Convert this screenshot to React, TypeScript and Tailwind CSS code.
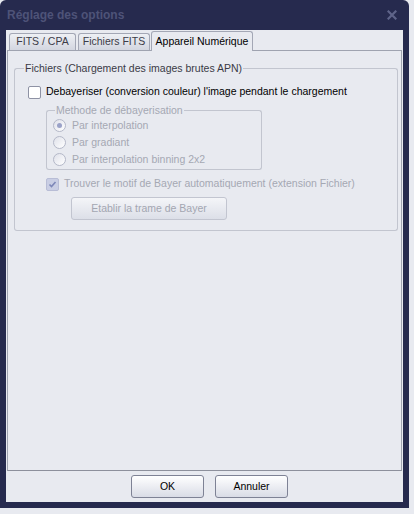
import React from "react";

const font = { fontFamily: '"Liberation Sans", Arial, sans-serif' };

function GroupBox({
  title,
  titleClass,
  lead,
  className,
  bodyClass,
  children,
}: {
  title: string;
  titleClass: string;
  lead: string;
  className: string;
  bodyClass: string;
  children: React.ReactNode;
}) {
  return (
    <div className={className}>
      <div className="flex h-[13px]">
        <div className={`${lead} h-[7px] self-end rounded-tl-[3px] border-l border-t border-[#c2c5cf]`} />
        <span className={`px-[1px] text-[10.5px] leading-[13px] ${titleClass}`}>{title}</span>
        <div className="h-[7px] flex-1 self-end rounded-tr-[3px] border-r border-t border-[#c2c5cf]" />
      </div>
      <div className={`rounded-b-[3px] border-x border-b border-[#c2c5cf] ${bodyClass}`}>{children}</div>
    </div>
  );
}

function Radio({ checked, label }: { checked?: boolean; label: string }) {
  return (
    <div className="flex h-[17px] items-center">
      <span className="flex h-[13px] w-[13px] items-center justify-center rounded-full border border-[#b4b8c8] bg-gradient-to-br from-[#dfe1ea] to-white">
        {checked && <span className="h-[5px] w-[5px] rounded-full bg-[#9aa2c8]" />}
      </span>
      <span className="ml-[6px] text-[10.5px] text-[#a5a8b3]">{label}</span>
    </div>
  );
}

function Button({ children, disabled }: { children: React.ReactNode; disabled?: boolean }) {
  return (
    <button
      className={
        disabled
          ? "flex h-[23px] w-[156px] items-center justify-center rounded-[3px] border border-[#c2c5d0] bg-gradient-to-b from-[#f4f5f8] to-[#dcdfe8] text-[10.5px] text-[#a3a6b1]"
          : "flex h-[23px] w-[73px] items-center justify-center rounded-[3px] border border-[#7e8295] bg-gradient-to-b from-white to-[#d9dce6] text-[10.5px] text-black"
      }
    >
      {children}
    </button>
  );
}

export default function App() {
  return (
    <div className="h-[514px] w-[414px] bg-[#e8eaf0]" style={font}>
      <div className="flex h-[508px] w-[409px] flex-col rounded-t-[6px] bg-[#262a4e] px-[6px] pb-[6px]">
        {/* title bar */}
        <div className="flex h-[30px] shrink-0 items-center justify-between pl-[1px] pr-[6px]">
          <span className="text-[12px] font-bold text-[#4e5378]">Réglage des options</span>
          <svg width="10" height="10" viewBox="0 0 10 10">
            <path d="M1.5 1.5 L8.5 8.5 M8.5 1.5 L1.5 8.5" stroke="#5f6489" strokeWidth="2.2" strokeLinecap="square" />
          </svg>
        </div>

        {/* client area */}
        <div className="flex flex-1 flex-col bg-[#e8eaf0] px-[1px]">
          {/* tabs */}
          <div className="flex h-[20px] items-end pl-[2px]">
            <div className="flex h-[17px] w-[67px] items-center justify-center rounded-t-[3px] border border-b-0 border-[#a3a7b5] bg-gradient-to-b from-[#eef0f4] to-[#d3d6e0] text-[10.5px] text-[#3c3c48]">
              FITS / CPA
            </div>
            <div className="ml-[2px] flex h-[17px] w-[72px] items-center justify-center rounded-t-[3px] border border-b-0 border-[#a3a7b5] bg-gradient-to-b from-[#eef0f4] to-[#d3d6e0] text-[10.5px] text-[#3c3c48]">
              Fichiers FITS
            </div>
            <div className="relative z-10 ml-[1px] -mb-[1px] flex h-[20px] w-[102px] items-center justify-center rounded-t-[3px] border border-b-0 border-[#a3a7b5] bg-[#e8eaf0] text-[10.5px] text-black">
              Appareil Numérique
            </div>
          </div>

          {/* tab panel */}
          <div className="h-[421px] border border-[#9fa3b0] border-b-[#8d909c]">
            <GroupBox
              title="Fichiers (Chargement des images brutes APN)"
              titleClass="text-[#3a3a46]"
              lead="w-[10px]"
              className="ml-[6px] mr-[3px] mt-[11px]"
              bodyClass="pb-[10px] pl-[13px]"
            >
              <div className="pt-[9px]" />
              <div className="flex h-[16px] items-center">
                <span className="h-[13px] w-[13px] rounded-[2px] border border-[#8e92a4] bg-white" />
                <span className="ml-[5px] text-[10.5px] text-black">
                  Debayeriser (conversion couleur) l'image pendant le chargement
                </span>
              </div>

              <GroupBox
                title="Methode de débayerisation"
                titleClass="text-[#a5a8b3]"
                lead="w-[9px]"
                className="ml-[18px] mt-[4px] w-[216px]"
                bodyClass="pb-[1px] pl-[6px]"
              >
                <Radio checked label="Par interpolation" />
                <Radio label="Par gradiant" />
                <Radio label="Par interpolation binning 2x2" />
              </GroupBox>

              <div className="ml-[18px] mt-[6px] flex h-[16px] items-center">
                <span className="flex h-[13px] w-[13px] items-center justify-center rounded-[2px] border border-[#b8bdd6] bg-[#c9cee4]">
                  <svg width="9" height="9" viewBox="0 0 9 9">
                    <path d="M1.5 4.5 L3.5 6.5 L7.5 2" fill="none" stroke="#7d87b8" strokeWidth="1.6" />
                  </svg>
                </span>
                <span className="ml-[5px] text-[10.5px] text-[#a5a8b3]">
                  Trouver le motif de Bayer automatiquement (extension Fichier)
                </span>
              </div>

              <div className="ml-[43px] mt-[5px]">
                <Button disabled>Etablir la trame de Bayer</Button>
              </div>
            </GroupBox>
          </div>

          {/* bottom buttons */}
          <div className="flex flex-1 items-start gap-[11px] pl-[124px] pt-[4px]">
            <Button>OK</Button>
            <Button>Annuler</Button>
          </div>
        </div>
      </div>
    </div>
  );
}
